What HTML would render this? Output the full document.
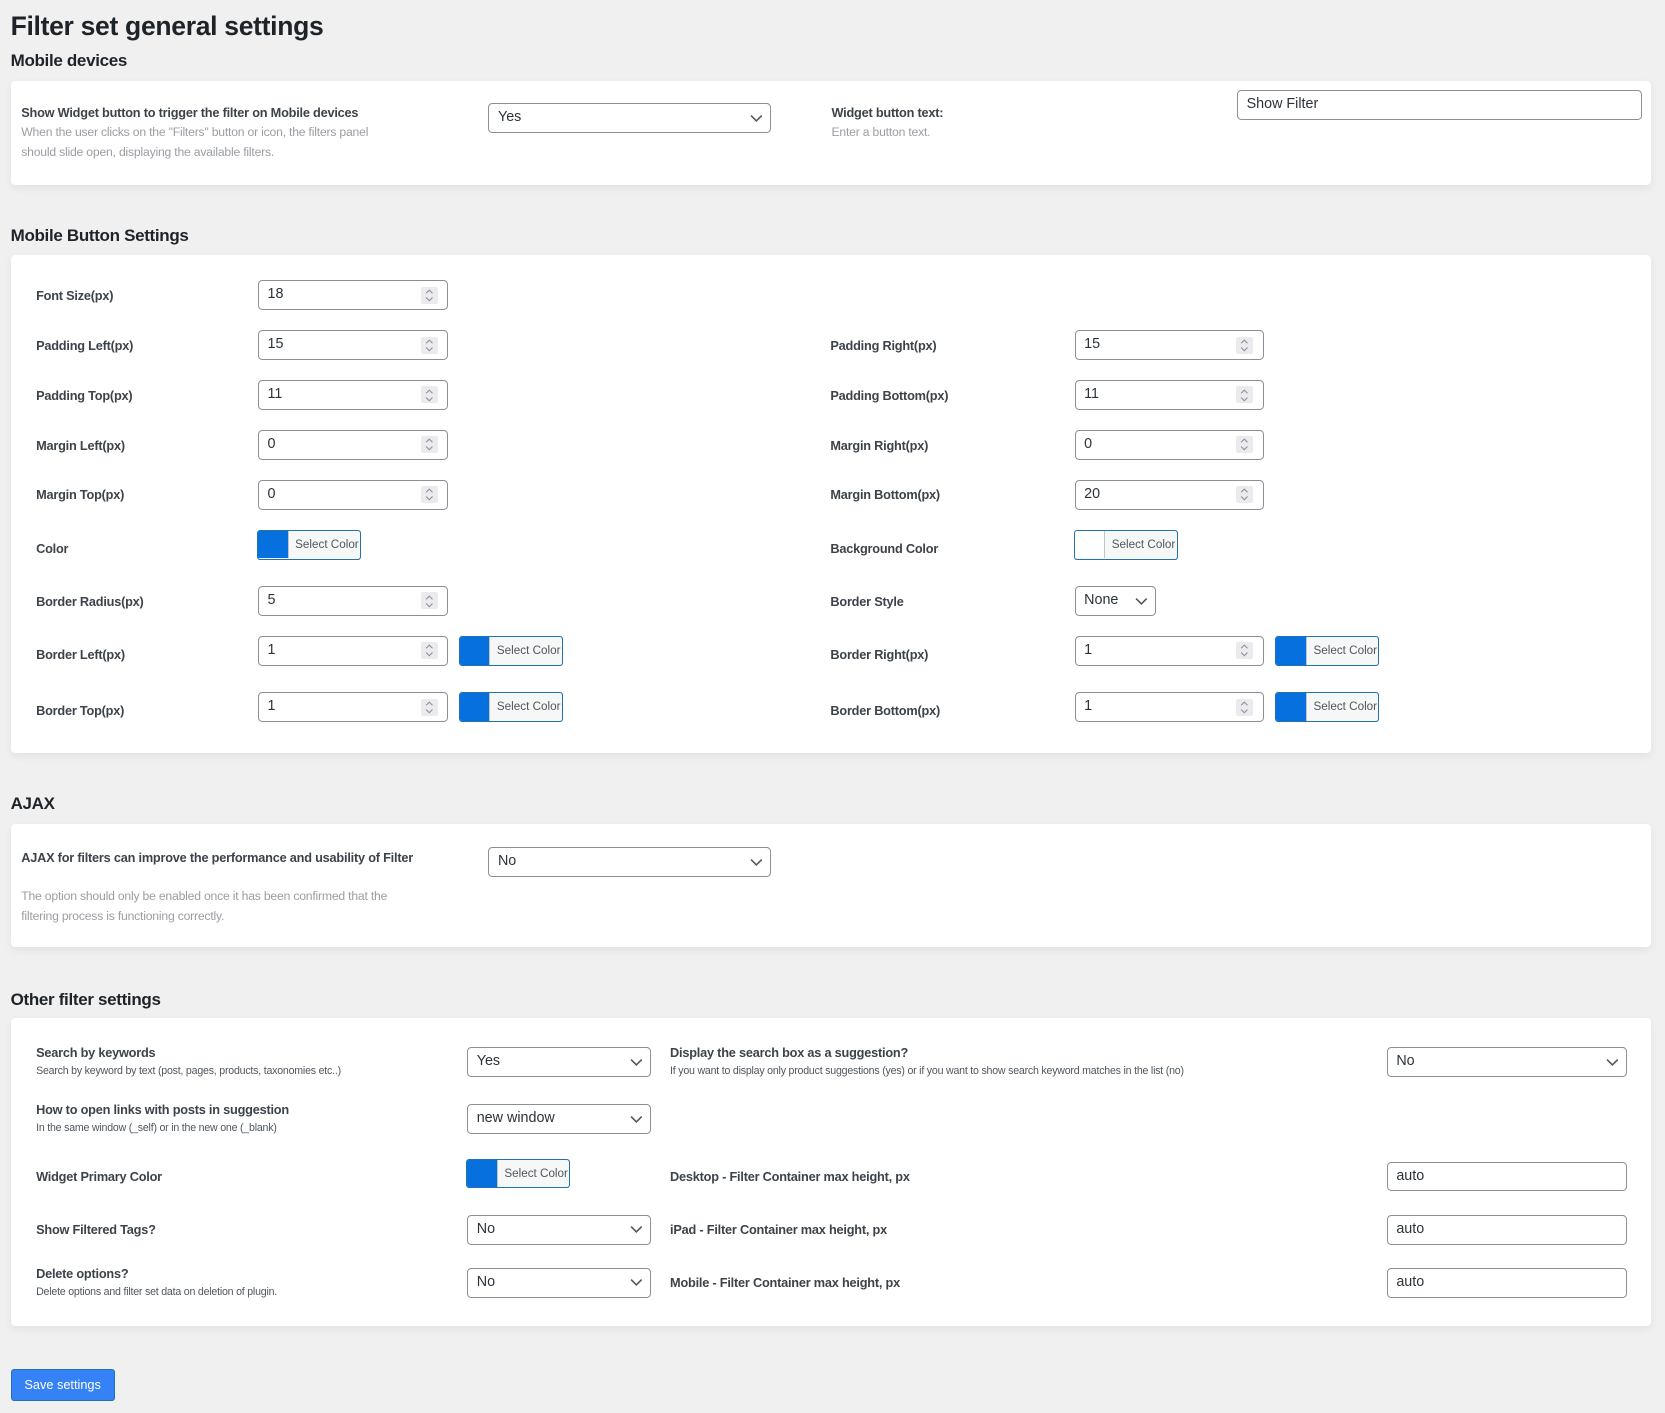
<!DOCTYPE html>
<html><head><meta charset="utf-8"><style>
html{zoom:1.0619}
body{margin:0;background:#f0f0f1;font-family:"Liberation Sans",sans-serif;color:#1d2327;width:1568px;height:1330px;position:relative;overflow:hidden}
.a{position:absolute}
h1,h2{margin:0;position:absolute;left:10px;font-weight:bold;color:#1d2327;letter-spacing:-0.3px}
h1{font-size:25px;top:10px}
h2{font-size:16px}
.p{position:absolute;left:10px;width:1545px;background:#fff;border-radius:4px;box-shadow:0 3px 8px rgba(0,0,0,.06)}
.lb{position:absolute;font-size:12px;font-weight:bold;color:#3c434a;letter-spacing:-0.2px;white-space:nowrap}
.ds{position:absolute;font-size:11.5px;color:#9a9ea3;line-height:19px;letter-spacing:-0.2px}
.ds2{position:absolute;font-size:10px;color:#50575e;white-space:nowrap;letter-spacing:-0.2px}
.in{position:absolute;box-sizing:border-box;height:28px;border:1px solid #8c8f94;border-radius:4px;background:#fff;font-size:13.5px;line-height:26px;padding-left:8px;color:#2c3338}
.sel svg{position:absolute;right:7px;top:9px}
.num:after{content:"";position:absolute;right:9px;top:5px;width:16px;height:16px;background:#ebebef;border-radius:2px}
.num svg{position:absolute;right:12px;top:6px;z-index:1}
.cb{position:absolute;box-sizing:border-box;height:28px;width:98px;border:1px solid #2271b1;border-radius:3px;background:#f6f7f7;overflow:hidden;font-size:11px;color:#50575e;line-height:26px}
.cb i{position:absolute;left:0;top:0;width:28px;height:26px;background:#0670de;border-right:1px solid #c3c4c7}
.cb i.w{background:#fff}
.cb span{position:absolute;left:35px}
</style></head><body>
<svg width="0" height="0" style="position:absolute"><defs>
<symbol id="ch" viewBox="0 0 12 8"><path d="M1 1.5l5 5 5-5" fill="none" stroke="#50575e" stroke-width="1.5"/></symbol>
<symbol id="sp" viewBox="0 0 10 14"><path d="M2 5l3-3 3 3M2 9l3 3 3-3" fill="none" stroke="#8c8f94" stroke-width="1"/></symbol>
</defs></svg>

<h1>Filter set general settings</h1>
<h2 style="top:48px">Mobile devices</h2>
<div class="p" style="top:76px;height:98px"></div>
<div class="lb" style="left:20px;top:99px">Show Widget button to trigger the filter on Mobile devices</div>
<div class="ds" style="left:20px;top:115px;width:360px">When the user clicks on the "Filters" button or icon, the filters panel should slide open, displaying the available filters.</div>
<div class="in sel" style="left:460px;top:97px;width:266px">Yes<svg width="12" height="8"><use href="#ch"/></svg></div>
<div class="lb" style="left:783px;top:99px">Widget button text:</div>
<div class="ds" style="left:783px;top:115px">Enter a button text.</div>
<div class="in" style="left:1165px;top:85px;width:381px">Show Filter</div>

<h2 style="top:213px">Mobile Button Settings</h2>
<div class="p" style="top:240px;height:469px"></div>

<div class="lb" style="left:34px;top:271px">Font Size(px)</div>
<div class="in num" style="left:243px;top:264px;width:179px">18<svg width="10" height="14"><use href="#sp"/></svg></div>

<div class="lb" style="left:34px;top:318px">Padding Left(px)</div>
<div class="in num" style="left:243px;top:311px;width:179px">15<svg width="10" height="14"><use href="#sp"/></svg></div>
<div class="lb" style="left:782px;top:318px">Padding Right(px)</div>
<div class="in num" style="left:1012px;top:311px;width:178px">15<svg width="10" height="14"><use href="#sp"/></svg></div>

<div class="lb" style="left:34px;top:365px">Padding Top(px)</div>
<div class="in num" style="left:243px;top:358px;width:179px">11<svg width="10" height="14"><use href="#sp"/></svg></div>
<div class="lb" style="left:782px;top:365px">Padding Bottom(px)</div>
<div class="in num" style="left:1012px;top:358px;width:178px">11<svg width="10" height="14"><use href="#sp"/></svg></div>

<div class="lb" style="left:34px;top:412px">Margin Left(px)</div>
<div class="in num" style="left:243px;top:405px;width:179px">0<svg width="10" height="14"><use href="#sp"/></svg></div>
<div class="lb" style="left:782px;top:412px">Margin Right(px)</div>
<div class="in num" style="left:1012px;top:405px;width:178px">0<svg width="10" height="14"><use href="#sp"/></svg></div>

<div class="lb" style="left:34px;top:459px">Margin Top(px)</div>
<div class="in num" style="left:243px;top:452px;width:179px">0<svg width="10" height="14"><use href="#sp"/></svg></div>
<div class="lb" style="left:782px;top:459px">Margin Bottom(px)</div>
<div class="in num" style="left:1012px;top:452px;width:178px">20<svg width="10" height="14"><use href="#sp"/></svg></div>

<div class="lb" style="left:34px;top:509px">Color</div>
<div class="cb" style="left:242px;top:499px"><i></i><span>Select Color</span></div>
<div class="lb" style="left:782px;top:509px">Background Color</div>
<div class="cb" style="left:1011px;top:499px"><i class="w"></i><span>Select Color</span></div>

<div class="lb" style="left:34px;top:559px">Border Radius(px)</div>
<div class="in num" style="left:243px;top:552px;width:179px">5<svg width="10" height="14"><use href="#sp"/></svg></div>
<div class="lb" style="left:782px;top:559px">Border Style</div>
<div class="in sel" style="left:1012px;top:552px;width:77px">None<svg width="12" height="8"><use href="#ch"/></svg></div>

<div class="lb" style="left:34px;top:609px">Border Left(px)</div>
<div class="in num" style="left:243px;top:599px;width:179px">1<svg width="10" height="14"><use href="#sp"/></svg></div>
<div class="cb" style="left:432px;top:599px"><i></i><span>Select Color</span></div>
<div class="lb" style="left:782px;top:609px">Border Right(px)</div>
<div class="in num" style="left:1012px;top:599px;width:178px">1<svg width="10" height="14"><use href="#sp"/></svg></div>
<div class="cb" style="left:1201px;top:599px"><i></i><span>Select Color</span></div>

<div class="lb" style="left:34px;top:662px">Border Top(px)</div>
<div class="in num" style="left:243px;top:652px;width:179px">1<svg width="10" height="14"><use href="#sp"/></svg></div>
<div class="cb" style="left:432px;top:652px"><i></i><span>Select Color</span></div>
<div class="lb" style="left:782px;top:662px">Border Bottom(px)</div>
<div class="in num" style="left:1012px;top:652px;width:178px">1<svg width="10" height="14"><use href="#sp"/></svg></div>
<div class="cb" style="left:1201px;top:652px"><i></i><span>Select Color</span></div>

<h2 style="top:748px">AJAX</h2>
<div class="p" style="top:776px;height:116px"></div>
<div class="lb" style="left:20px;top:799px;white-space:normal;width:380px;line-height:19px">AJAX for filters can improve the performance and usability of Filter</div>
<div class="ds" style="left:20px;top:834px;width:380px">The option should only be enabled once it has been confirmed that the filtering process is functioning correctly.</div>
<div class="in sel" style="left:460px;top:798px;width:266px">No<svg width="12" height="8"><use href="#ch"/></svg></div>

<h2 style="top:932px">Other filter settings</h2>
<div class="p" style="top:959px;height:290px"></div>

<div class="lb" style="left:34px;top:984px">Search by keywords</div>
<div class="ds2" style="left:34px;top:1003px">Search by keyword by text (post, pages, products, taxonomies etc..)</div>
<div class="in sel" style="left:440px;top:986px;width:173px">Yes<svg width="12" height="8"><use href="#ch"/></svg></div>
<div class="lb" style="left:631px;top:984px">Display the search box as a suggestion?</div>
<div class="ds2" style="left:631px;top:1003px">If you want to display only product suggestions (yes) or if you want to show search keyword matches in the list (no)</div>
<div class="in sel" style="left:1306px;top:986px;width:226px">No<svg width="12" height="8"><use href="#ch"/></svg></div>

<div class="lb" style="left:34px;top:1038px">How to open links with posts in suggestion</div>
<div class="ds2" style="left:34px;top:1057px">In the same window (_self) or in the new one (_blank)</div>
<div class="in sel" style="left:440px;top:1040px;width:173px">new window<svg width="12" height="8"><use href="#ch"/></svg></div>

<div class="lb" style="left:34px;top:1101px">Widget Primary Color</div>
<div class="cb" style="left:439px;top:1091px"><i></i><span>Select Color</span></div>
<div class="lb" style="left:631px;top:1101px">Desktop - Filter Container max height, px</div>
<div class="in" style="left:1306px;top:1094px;width:226px">auto</div>

<div class="lb" style="left:34px;top:1151px">Show Filtered Tags?</div>
<div class="in sel" style="left:440px;top:1144px;width:173px">No<svg width="12" height="8"><use href="#ch"/></svg></div>
<div class="lb" style="left:631px;top:1151px">iPad - Filter Container max height, px</div>
<div class="in" style="left:1306px;top:1144px;width:226px">auto</div>

<div class="lb" style="left:34px;top:1192px">Delete options?</div>
<div class="ds2" style="left:34px;top:1211px">Delete options and filter set data on deletion of plugin.</div>
<div class="in sel" style="left:440px;top:1194px;width:173px">No<svg width="12" height="8"><use href="#ch"/></svg></div>
<div class="lb" style="left:631px;top:1201px">Mobile - Filter Container max height, px</div>
<div class="in" style="left:1306px;top:1194px;width:226px">auto</div>

<div class="a" style="left:10px;top:1289px;width:98px;height:30px;box-sizing:border-box;background:#3582f7;border:1px solid #2271b1;border-radius:3px;color:#fff;font-size:12px;text-align:center;line-height:28px">Save settings</div>
</body></html>
